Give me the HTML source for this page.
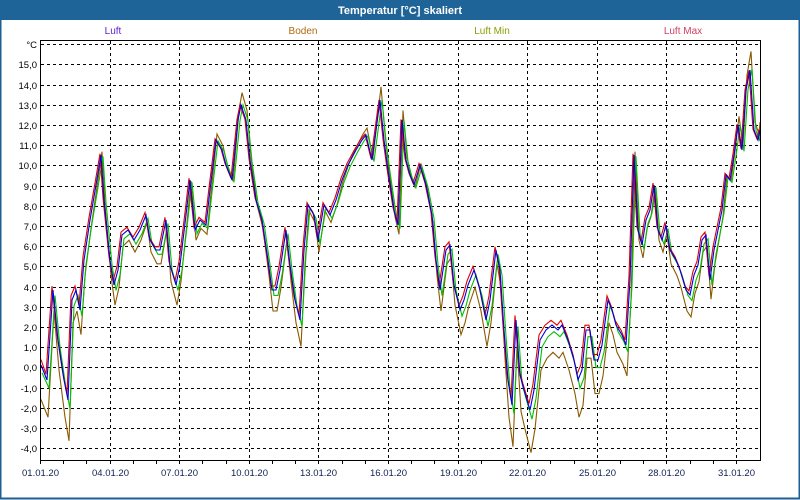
<!DOCTYPE html>
<html><head><meta charset="utf-8"><style>
html,body{margin:0;padding:0;background:#fff}
body{width:800px;height:500px;overflow:hidden;font-family:"Liberation Sans",sans-serif}
</style></head><body>
<svg id="s" width="800" height="500" xmlns="http://www.w3.org/2000/svg" style="display:block">
<rect x="0" y="0" width="800" height="500" fill="#fff"/>
<rect x="0.5" y="0.5" width="799" height="498" fill="none" stroke="#1e5f95" stroke-width="2"/>
<rect x="0" y="0" width="800" height="20" fill="#1e6499"/>
<text x="400" y="14" fill="#fff" font-size="11" font-weight="bold" text-anchor="middle">Temperatur [°C] skaliert</text>
<g font-size="10" text-anchor="middle">
<text x="113" y="34" fill="#5a1fd0">Luft</text>
<text x="303" y="34" fill="#b06a10">Boden</text>
<text x="492" y="34" fill="#8aa000">Luft Min</text>
<text x="683" y="34" fill="#d04060">Luft Max</text>
</g>
<g id="grid" stroke="#000" stroke-width="1" stroke-dasharray="3,3"></g>
<g id="lines" fill="none" stroke-width="1.1"></g>
<rect x="40.5" y="40.5" width="720" height="420" fill="none" stroke="#000"/>
<g id="lab" font-size="9.5" fill="#000"></g>
</svg>
<script>
var ns="http://www.w3.org/2000/svg",g=document.getElementById('grid'),lab=document.getElementById('lab'),L=document.getElementById('lines');
function el(p,t,a,txt){var e=document.createElementNS(ns,t);for(var k in a)e.setAttribute(k,a[k]);if(txt)e.textContent=txt;p.appendChild(e);return e;}
function Y(v){return 64.3+(15-v)*20.2;}
el(g,'line',{x1:41,x2:760,y1:44.5,y2:44.5});
el(lab,'text',{x:37,y:48,'text-anchor':'end'},'°C');
for(var v=15;v>=-4;v--){var y=Math.round(Y(v))+0.5;el(g,'line',{x1:41,x2:760,y1:y,y2:y});
el(lab,'text',{x:37,y:y+3.5,'text-anchor':'end'},(v<0?'-':'')+Math.abs(v)+',0');}
var d=['01','04','07','10','13','16','19','22','25','28','31'];
for(var i=0;i<=30;i++){var x=Math.round(40+i*23.2)+0.5;
el(L.parentNode,'line',{x1:x,x2:x,y1:460,y2:464,stroke:'#000'});
if(i%3==0){if(i>0)el(g,'line',{x1:x,x2:x,y1:41,y2:460});
el(lab,'text',{x:x,y:476,'text-anchor':'middle',fill:'#102050'},d[i/3]+'.01.20');}}
var P=[40,365,47,380,53,290,58,340,64,380,68,400,72,300,76,290,80,310,84,260,90,220,96,185,101,155,104,200,110,260,114,285,118,270,122,235,128,230,134,240,140,230,146,215,150,240,156,250,160,250,166,220,170,265,176,285,180,265,186,215,190,180,195,230,200,220,206,225,210,190,216,140,222,150,226,165,232,180,238,120,241,105,246,120,250,160,256,200,262,220,268,260,272,290,276,290,280,270,286,230,290,265,295,300,300,320,304,250,308,205,314,215,318,240,324,205,330,215,336,200,342,180,348,165,356,150,362,140,366,135,372,160,376,130,380,100,384,140,388,170,394,210,398,225,402,120,406,160,410,175,414,185,420,165,426,185,432,215,436,260,440,290,446,250,450,245,454,285,460,310,464,300,468,285,474,270,480,290,486,320,490,300,496,250,500,270,504,330,508,380,512,405,516,320,520,375,524,390,530,410,534,390,540,340,546,330,552,325,558,330,562,325,568,340,574,360,578,380,582,370,586,330,590,330,594,360,598,360,602,345,608,300,612,310,616,325,622,335,626,345,630,280,634,155,638,230,642,245,646,220,650,210,654,185,658,230,662,240,666,225,670,250,676,260,680,270,686,290,690,295,694,275,698,265,702,240,706,235,710,280,714,250,718,230,722,210,726,175,730,180,734,155,738,125,742,150,746,90,750,70,754,130,758,140,760,130];
function pts(dx,dy,k){var s=[];for(var i=0;i<P.length;i+=2){var y=P[i+1];y=y+(y-240)*k+dy;s.push(Math.min(760,Math.max(41,P[i]+dx))+','+y.toFixed(1));}return s.join(' ');}
el(L,'polyline',{points:pts(1,12,0.18),stroke:'#8a5a00'});
el(L,'polyline',{points:pts(2,4,0.03),stroke:'#00c000'});
el(L,'polyline',{points:pts(-1,-3,-0.02),stroke:'#e00000'});
el(L,'polyline',{points:pts(0,0,0),stroke:'#0000e0'});
</script>
</body></html>
